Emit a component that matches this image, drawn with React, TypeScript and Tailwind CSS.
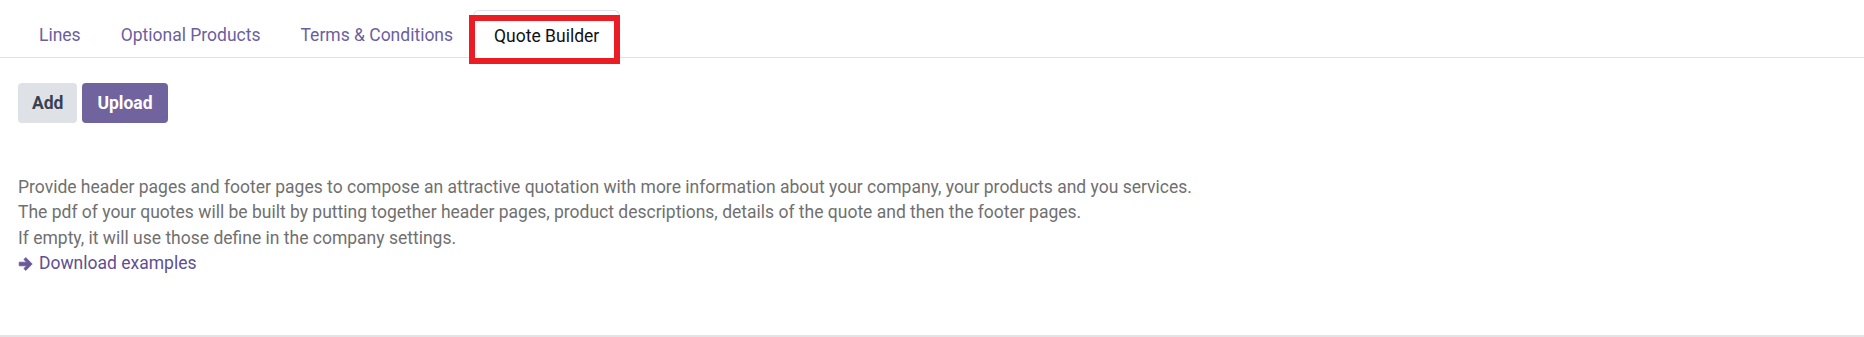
import React from 'react';

const tabs = ['Lines', 'Optional Products', 'Terms & Conditions', 'Quote Builder'];

const ArrowIcon = () => (
  <svg viewBox="0 0 16 16" className="w-[16px] h-[16px] shrink-0" fill="#6a5a9a">
    <path d="M1.2 6.2 H8.6 L5.9 3.5 L7.8 1.6 L14.2 8 L7.8 14.4 L5.9 12.5 L8.6 9.8 H1.2 Z" strokeLinejoin="round" stroke="#6a5a9a" strokeWidth="0.8" />
  </svg>
);

export default function App() {
  return (
    <div
      className="w-full h-[337px] bg-white flex flex-col border-b-2 border-[#e3e3e6]"
      style={{ fontFamily: 'Roboto, "Open Sans", sans-serif' }}
    >
      <nav className="flex items-end h-[58px] border-b border-[#dee2e6] px-[19px]">
        {tabs.map((t) => {
          const active = t === 'Quote Builder';
          return (
            <div
              key={t}
              className={
                active
                  ? 'relative h-[48px] -mb-px flex items-center pt-[4px] px-5 bg-white border border-b-0 border-[#dee2e6] rounded-t-md text-[17.5px] text-[#111]'
                  : 'h-[47px] flex items-center pt-[4px] px-5 text-[17.5px] text-[#6b5fa0]'
              }
            >
              {t}
              {active && (
                <span className="absolute left-[-5px] right-[-1px] top-[4px] bottom-[-6px] border-[6px] border-[#ec1c24]" />
              )}
            </div>
          );
        })}
      </nav>

      <div className="px-[18px] pt-[25px] flex gap-[5px]">
        <button className="h-[40px] px-[14px] rounded bg-[#dee1e5] text-[#374151] font-bold text-[17.5px]">
          Add
        </button>
        <button className="h-[40px] px-[15px] rounded bg-[#71639e] text-white font-bold text-[17.5px]">
          Upload
        </button>
      </div>

      <div className="px-[18px] pt-[52px] text-[17.5px] leading-[25.4px] text-[#707070]">
        <p>
          Provide header pages and footer pages to compose an attractive quotation with more information about your company, your products and you services.
        </p>
        <p>
          The pdf of your quotes will be built by putting together header pages, product descriptions, details of the quote and then the footer pages.
        </p>
        <p>If empty, it will use those define in the company settings.</p>
        <a className="flex items-center gap-[5px] text-[#5f4f91]">
          <ArrowIcon />
          Download examples
        </a>
      </div>
    </div>
  );
}
